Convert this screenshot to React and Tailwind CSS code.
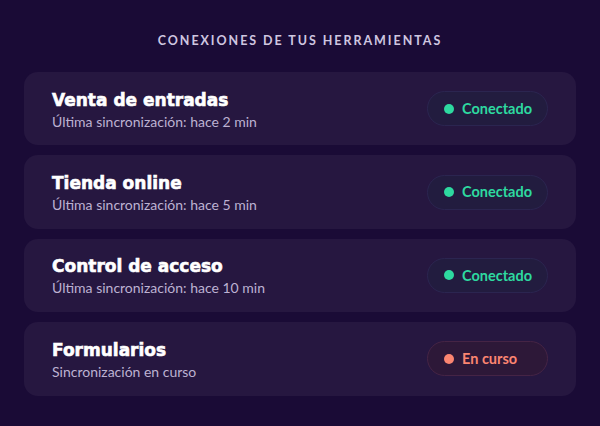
import React from 'react';

const tools = [
  { name: 'Venta de entradas', sub: 'Última sincronización: hace 2 min', status: 'ok' },
  { name: 'Tienda online', sub: 'Última sincronización: hace 5 min', status: 'ok' },
  { name: 'Control de acceso', sub: 'Última sincronización: hace 10 min', status: 'ok' },
  { name: 'Formularios', sub: 'Sincronización en curso', status: 'pending' },
];

function Badge({ status }) {
  const ok = status === 'ok';
  return (
    <div
      className={
        ok
          ? 'flex items-center gap-[8px] w-[121px] h-[35px] px-[16px] rounded-full bg-[#221c3f] border border-[#2b2550]'
          : 'flex items-center gap-[8px] w-[121px] h-[35px] px-[16px] rounded-full bg-[#2d1838] border border-[#452445]'
      }
    >
      <span className={ok ? 'shrink-0 w-[10px] h-[10px] rounded-full bg-[#2ed9a0]' : 'shrink-0 w-[10px] h-[10px] rounded-full bg-[#fb8571]'} />
      <span className={ok ? 'whitespace-nowrap text-[14.5px] font-bold text-[#2ed9a0]' : 'whitespace-nowrap text-[14.5px] font-bold text-[#fb8571]'}>
        {ok ? 'Conectado' : 'En curso'}
      </span>
    </div>
  );
}

export default function App() {
  return (
    <div
      className="w-[600px] h-[426px] bg-[#1a0b36] px-[24px] pt-[32px]"
      style={{ fontFamily: 'Lato, "Noto Sans", sans-serif' }}
    >
      <h2 className="text-center text-[12.5px] font-bold tracking-[1.95px] text-[#cfc6e0] leading-[18px] mb-[22px]">
        CONEXIONES DE TUS HERRAMIENTAS
      </h2>
      <div className="flex flex-col gap-[10px]">
        {tools.map((t) => (
          <div
            key={t.name}
            className="h-[73.4px] rounded-[14px] bg-[#261740] flex items-center justify-between pl-[28px] pr-[28px]"
          >
            <div className="flex flex-col pt-[2px]">
              <span
                className="text-[17px] font-bold text-white leading-[22px] [-webkit-text-stroke:0.6px_white]"
                style={{ fontFamily: '"DejaVu Sans", sans-serif' }}
              >
                {t.name}
              </span>
              <span className="text-[14px] text-[#bdb2d2] leading-[18px] mt-[2px]">{t.sub}</span>
            </div>
            <Badge status={t.status} />
          </div>
        ))}
      </div>
    </div>
  );
}
